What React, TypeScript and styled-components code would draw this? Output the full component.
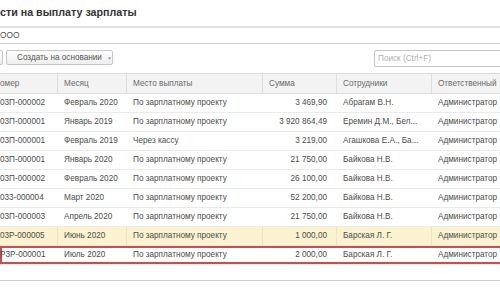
import React from "react";
import styled, { createGlobalStyle } from "styled-components";

const GlobalStyle = createGlobalStyle`
  html, body {
    margin: 0;
    padding: 0;
    background: #fff;
    overflow: hidden;
  }
  body {
    font-family: "Liberation Sans", Arial, sans-serif;
    color: #4d4d4d;
  }
`;

const Page = styled.div`
  width: 500px;
  height: 300px;
  overflow: hidden;
  display: flex;
  flex-direction: column;
`;

const Title = styled.h1`
  margin: 0;
  height: 26px;
  line-height: 25px;
  font-size: 10.7px;
  font-weight: bold;
  color: #333;
  white-space: nowrap;
`;

const Field = styled.div`
  height: 15px;
  line-height: 15px;
  border-top: 2px solid #e0e0e0;
  border-bottom: 1px solid #cfcfcf;
  font-size: 8.4px;
  color: #555;
`;

const Toolbar = styled.div`
  height: 29px;
  display: flex;
  align-items: flex-start;
  padding-top: 6px;
  box-sizing: border-box;
`;

const Button = styled.button<{ $cut?: boolean }>`
  height: 15px;
  margin: 0 0 0 ${({ $cut }) => ($cut ? "-10px" : "3px")};
  width: ${({ $cut }) => ($cut ? "13px" : "107px")};
  padding: 0 0 0 10px;
  display: flex;
  align-items: center;
  gap: 5px;
  border: 1px solid #c9c9c9;
  border-radius: 2px;
  background: linear-gradient(#ffffff, #eeeeee);
  font-family: "Liberation Sans", Arial, sans-serif;
  font-size: 8.2px;
  color: #555;
  white-space: nowrap;
`;

const Caret = styled.span`
  font-size: 5px;
  color: #999;
`;

const Search = styled.div`
  margin-left: auto;
  margin-right: -4px;
  width: 130px;
  height: 17px;
  box-sizing: border-box;
  border: 1px solid #c4c4c4;
  border-radius: 2px;
  padding-left: 3px;
  line-height: 15px;
  font-size: 8.2px;
  color: #b0b0b0;
`;

const Table = styled.div`
  height: 208px;
  margin-right: -4px;
  border-top: 1px solid #dadada;
  border-bottom: 1px solid #cdcdcd;
  box-sizing: border-box;
`;

const cols = "58px 69px 136px 74px 95px 1fr";

const HeadRow = styled.div`
  display: grid;
  grid-template-columns: ${cols};
  height: 19px;
  background: #f3f3f3;
  border-bottom: 1px solid #e2e2e2;
`;

const HeadCell = styled.div<{ $first?: boolean }>`
  padding-left: ${({ $first }) => ($first ? "0" : "6px")};
  line-height: 19px;
  font-size: 8.2px;
  color: #6a6a6a;
  border-right: 1px solid #dedede;
  white-space: nowrap;
  overflow: hidden;
`;

const Row = styled.div<{ $tone?: "current" | "selected" }>`
  display: grid;
  grid-template-columns: ${cols};
  height: 19px;
  box-sizing: border-box;
  border-bottom: 1px solid #ebebeb;
  background: ${({ $tone }) => ($tone === "current" ? "#fbf2cf" : "#fff")};
  box-shadow: ${({ $tone }) =>
    $tone === "selected" ? "inset 0 0 0 2px #d24b4b" : "none"};
`;

const Cell = styled.div<{ $first?: boolean; $num?: boolean; $lined?: boolean }>`
  padding: 0 ${({ $num }) => ($num ? "9px" : "0")} 0
    ${({ $first, $num }) => ($first || $num ? "0" : "6px")};
  text-align: ${({ $num }) => ($num ? "right" : "left")};
  line-height: 18px;
  font-size: 8.2px;
  color: #4d4d4d;
  white-space: nowrap;
  overflow: hidden;
  border-right: 1px solid ${({ $lined }) => ($lined ? "#efe4bb" : "transparent")};
`;

type Doc = {
  num: string;
  month: string;
  place: string;
  sum: string;
  staff: string;
  tone?: "current" | "selected";
};

const docs: Doc[] = [
  { num: "03П-000002", month: "Февраль 2020", place: "По зарплатному проекту", sum: "3 469,90", staff: "Абрагам В.Н." },
  { num: "03П-000001", month: "Январь 2019", place: "По зарплатному проекту", sum: "3 920 864,49", staff: "Еремин Д.М., Бел..." },
  { num: "03П-000001", month: "Февраль 2019", place: "Через кассу", sum: "3 219,00", staff: "Агашкова Е.А., Ба..." },
  { num: "03П-000001", month: "Январь 2020", place: "По зарплатному проекту", sum: "21 750,00", staff: "Байкова Н.В." },
  { num: "03П-000002", month: "Февраль 2020", place: "По зарплатному проекту", sum: "26 100,00", staff: "Байкова Н.В." },
  { num: "033-000004", month: "Март 2020", place: "По зарплатному проекту", sum: "52 200,00", staff: "Байкова Н.В." },
  { num: "03П-000003", month: "Апрель 2020", place: "По зарплатному проекту", sum: "21 750,00", staff: "Байкова Н.В." },
  { num: "03Р-000005", month: "Июнь 2020", place: "По зарплатному проекту", sum: "1 000,00", staff: "Барская Л. Г.", tone: "current" },
  { num: "Р3Р-000001", month: "Июль 2020", place: "По зарплатному проекту", sum: "2 000,00", staff: "Барская Л. Г.", tone: "selected" },
];

const headers = ["омер", "Месяц", "Место выплаты", "Сумма", "Сотрудники", "Ответственный"];

export default function App() {
  return (
    <Page>
      <GlobalStyle />
      <Title>сти на выплату зарплаты</Title>
      <Field>ООО</Field>
      <Toolbar>
        <Button $cut />
        <Button>
          Создать на основании <Caret>▼</Caret>
        </Button>
        <Search>Поиск (Ctrl+F)</Search>
      </Toolbar>
      <Table>
        <HeadRow>
          {headers.map((h, i) => (
            <HeadCell key={h} $first={i === 0}>
              {h}
            </HeadCell>
          ))}
        </HeadRow>
        {docs.map((d, i) => {
          const lined = d.tone === "current";
          return (
            <Row key={i} $tone={d.tone}>
              <Cell $first $lined={lined}>{d.num}</Cell>
              <Cell $lined={lined}>{d.month}</Cell>
              <Cell $lined={lined}>{d.place}</Cell>
              <Cell $num $lined={lined}>{d.sum}</Cell>
              <Cell $lined={lined}>{d.staff}</Cell>
              <Cell>Администратор</Cell>
            </Row>
          );
        })}
      </Table>
    </Page>
  );
}
